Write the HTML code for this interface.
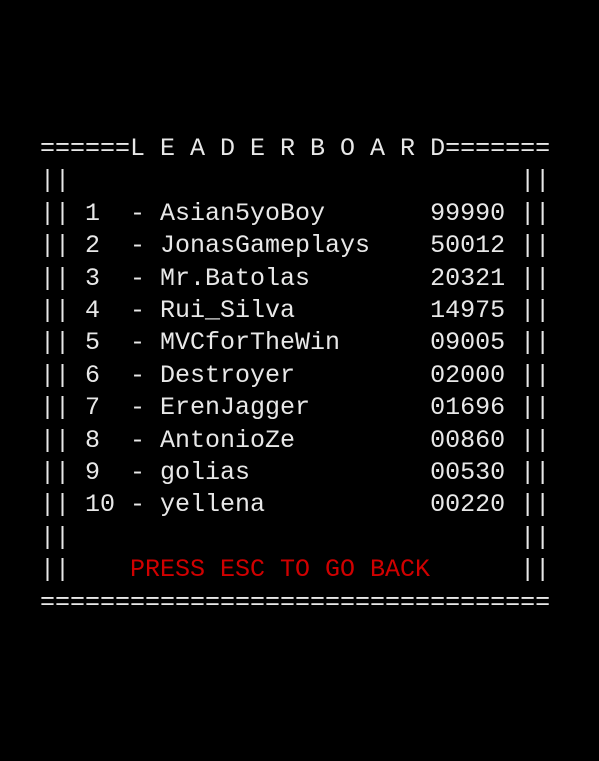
<!DOCTYPE html>
<html><head><style>
html,body{margin:0;padding:0;background:#000;width:599px;height:761px;overflow:hidden}
pre{position:absolute;left:40px;top:133px;margin:0;font-family:"Liberation Mono",monospace;font-size:25px;line-height:32.4px;color:#e8e8e8}
.r{color:#d00000}
</style></head><body>
<pre>======L E A D E R B O A R D=======
||                              ||
|| 1  - Asian5yoBoy       99990 ||
|| 2  - JonasGameplays    50012 ||
|| 3  - Mr.Batolas        20321 ||
|| 4  - Rui_Silva         14975 ||
|| 5  - MVCforTheWin      09005 ||
|| 6  - Destroyer         02000 ||
|| 7  - ErenJagger        01696 ||
|| 8  - AntonioZe         00860 ||
|| 9  - golias            00530 ||
|| 10 - yellena           00220 ||
||                              ||
||    <span class="r">PRESS ESC TO GO BACK</span>      ||
==================================</pre>
</body></html>
